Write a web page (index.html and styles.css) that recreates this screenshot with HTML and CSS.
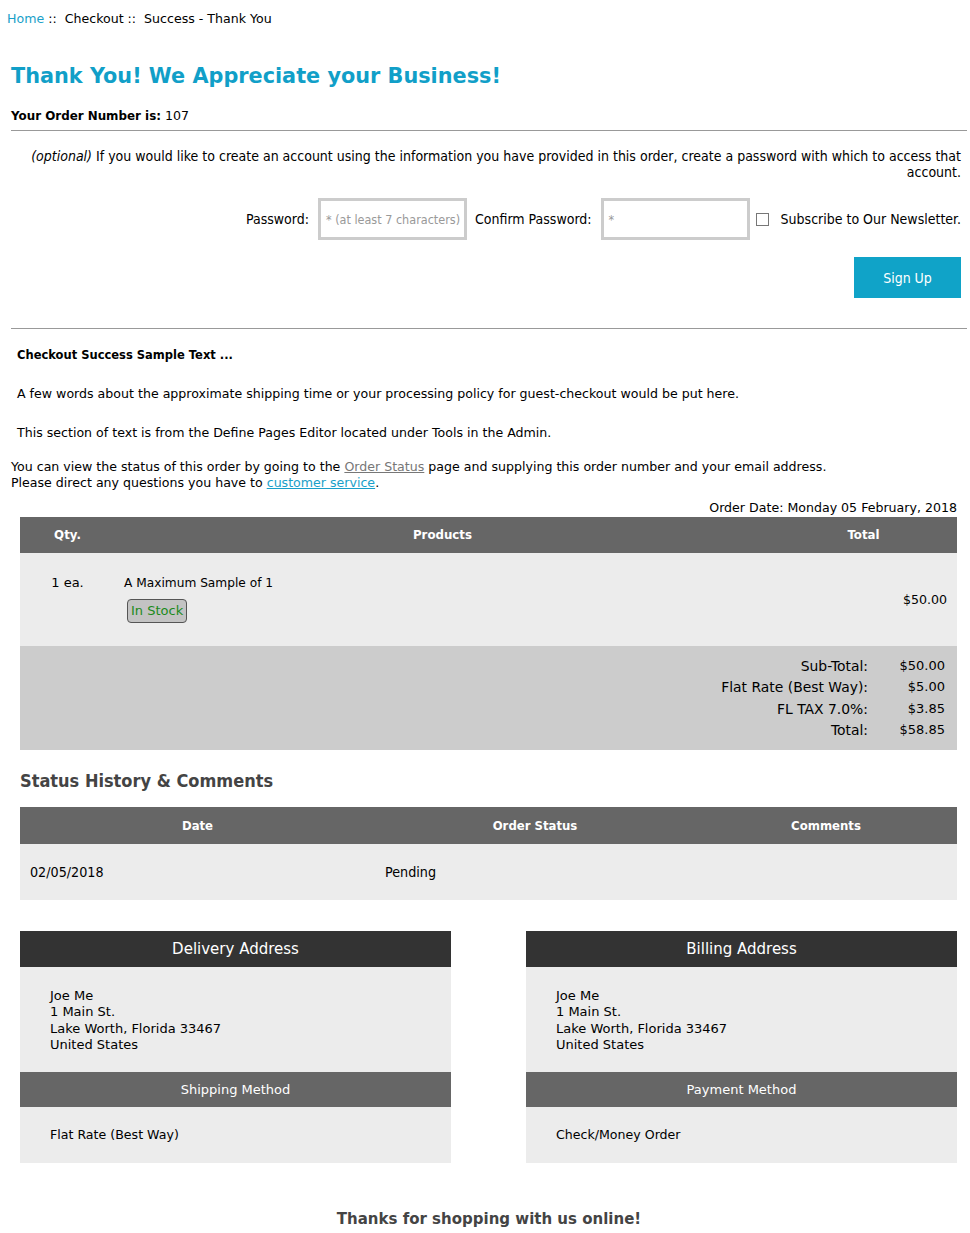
FILE: index.html
```html
<!DOCTYPE html>
<html>
<head>
<meta charset="utf-8">
<link rel="stylesheet" href="styles.css">
</head>
<body>
<div class="page">
  <div class="breadcrumb"><a href="#" class="crumb-link">Home</a>&nbsp;::&nbsp; Checkout&nbsp;::&nbsp; Success - Thank You</div>

  <h1 class="title">Thank You! We Appreciate your Business!</h1>

  <div class="order-num"><b>Your Order Number is:</b> 107</div>
  <hr class="rule">

  <div class="account">
    <p class="optional"><i>(optional)</i> If you would like to create an account using the information you have provided in this order, create a password with which to access that account.</p>
    <div class="form-row">
      <label class="lbl">Password:</label>
      <div class="field"><span class="ph">* (at least 7 characters)</span></div>
      <label class="lbl">Confirm Password:</label>
      <div class="field"><span class="ph">*</span></div>
      <span class="checkbox"></span>
      <label class="lbl news">Subscribe to Our Newsletter.</label>
    </div>
    <div class="btn-row"><button class="signup">Sign Up</button></div>
  </div>
  <hr class="rule">

  <div class="define">
    <p class="define-title">Checkout Success Sample Text ...</p>
    <p>A few words about the approximate shipping time or your processing policy for guest-checkout would be put here.</p>
    <p>This section of text is from the Define Pages Editor located under Tools in the Admin.</p>
  </div>

  <div class="status-note">You can view the status of this order by going to the <a href="#" class="gray-link">Order Status</a> page and supplying this order number and your email address.<br>Please direct any questions you have to <a href="#" class="blue-link">customer service</a>.</div>

  <div class="wrap">
    <div class="order-date">Order Date: Monday 05 February, 2018</div>
    <table class="products">
      <thead>
        <tr><th class="c-qty">Qty.</th><th class="c-prod">Products</th><th class="c-total">Total</th></tr>
      </thead>
      <tbody>
        <tr class="item">
          <td class="qty">1 ea.</td>
          <td class="prod"><span class="pname">A Maximum Sample of 1</span><br><span class="stock">In Stock</span></td>
          <td class="price">$50.00</td>
        </tr>
        <tr class="totals">
          <td colspan="3">
            <div class="tot-grid">
              <span class="tl">Sub-Total:</span><span>$50.00</span>
              <span class="tl">Flat Rate (Best Way):</span><span>$5.00</span>
              <span class="tl">FL TAX 7.0%:</span><span>$3.85</span>
              <span class="tl">Total:</span><span>$58.85</span>
            </div>
          </td>
        </tr>
      </tbody>
    </table>

    <h2 class="history-title">Status History &amp; Comments</h2>
    <table class="history">
      <thead>
        <tr><th class="h-date">Date</th><th class="h-status">Order Status</th><th class="h-comm">Comments</th></tr>
      </thead>
      <tbody>
        <tr><td>02/05/2018</td><td>Pending</td><td></td></tr>
      </tbody>
    </table>

    <div class="addresses">
      <div class="addr-box">
        <div class="addr-head">Delivery Address</div>
        <div class="addr-body">Joe Me<br>1 Main St.<br>Lake Worth, Florida 33467<br>United States</div>
        <div class="addr-sub">Shipping Method</div>
        <div class="addr-method">Flat Rate (Best Way)</div>
      </div>
      <div class="addr-box">
        <div class="addr-head">Billing Address</div>
        <div class="addr-body">Joe Me<br>1 Main St.<br>Lake Worth, Florida 33467<br>United States</div>
        <div class="addr-sub">Payment Method</div>
        <div class="addr-method">Check/Money Order</div>
      </div>
    </div>
  </div>

  <h3 class="thanks">Thanks for shopping with us online!</h3>
</div>
</body>
</html>
```

FILE: styles.css
```css
* { box-sizing: border-box; }
html, body { margin: 0; padding: 0; background: #fff; }
body {
  font-family: "DejaVu Sans", Verdana, sans-serif;
  font-size: 12.6px;
  color: #000;
}
.page { padding: 0 3px 0 11px; }

.breadcrumb {
  margin-left: -4px;
  padding-top: 11px;
  line-height: 16px;
  font-size: 12.6px;
}
.crumb-link { color: #199fc9; text-decoration: none; }

.title {
  margin: 35px 0 0 0;
  font-size: 20.8px;
  line-height: 28px;
  font-weight: bold;
  color: #119fc8;
}
.order-num {
  margin-top: 18px;
  line-height: 16px;
}
.order-num b { font-size: 11.9px; }
.rule {
  margin: 6px 0 0 0;
  border: 0;
  border-top: 1px solid #999;
  height: 0;
}

.account {
  padding-right: 6px;
  font-family: "DejaVu Sans Condensed", "DejaVu Sans", sans-serif;
  font-size: 14px;
}
.optional {
  margin: 17px 0 0 0;
  text-align: right;
  line-height: 16px;
}
.form-row {
  display: flex;
  justify-content: flex-end;
  align-items: center;
  margin-top: 18px;
}
.lbl { line-height: 16px; }
.field {
  width: 149px;
  height: 42px;
  border: 3px solid #cccccc;
  padding: 0 0 0 5px;
  display: flex;
  align-items: center;
  font-size: 12.5px;
  color: #999;
  margin: 0 8px 0 9px;
}
.checkbox {
  width: 13px;
  height: 13px;
  border: 1px solid #777;
  background: #fff;
  margin: 0 12px 0 -2px;
}
.btn-row {
  display: flex;
  justify-content: flex-end;
  margin-top: 17px;
  padding-bottom: 24px;
}
.signup {
  width: 107px;
  height: 41px;
  border: 0;
  background: #10a3c8;
  color: #fff;
  font-family: "DejaVu Sans Condensed", "DejaVu Sans", sans-serif;
  font-size: 14px;
  padding: 0;
}

.define { padding-left: 6px; }
.define p { margin: 0; line-height: 16px; }
.define .define-title { margin-top: 18px; font-weight: bold; font-size: 11.5px; }
.define p + p { margin-top: 23px; }

.status-note {
  margin-top: 18px;
  line-height: 16px;
}
.gray-link { color: #777; }
.blue-link { color: #199fc9; }

.wrap { padding: 0 10px 0 9px; }
.order-date {
  margin-top: 9px;
  margin-bottom: 1px;
  text-align: right;
  line-height: 16px;
}
table { border-collapse: collapse; width: 100%; }
.products th {
  background: #666;
  color: #fff;
  font-weight: bold;
  font-size: 11.8px;
  height: 36px;
  padding: 0;
  text-align: center;
}
.c-qty { width: 95px; }
.c-total { width: 187px; }
.item td { background: #ececec; height: 93px; padding: 0; vertical-align: middle; }
.item .qty { text-align: center; vertical-align: top; padding-top: 22px; font-size: 13px; }
.item .prod { vertical-align: top; padding: 22px 0 0 9px; line-height: 16px; }
.pname { font-size: 12.2px; }
.item .price { text-align: right; padding-right: 10px; }
.stock {
  display: inline-block;
  margin: 8px 0 0 3px;
  padding: 3px 3px;
  line-height: 16px;
  background: #c3c3c3;
  border: 1px solid #555;
  border-radius: 4px;
  color: #1b8a1b;
  font-size: 13px;
}
.totals td { background: #cccccc; padding: 12px 12px 12px 0; }
.tot-grid {
  display: grid;
  grid-template-columns: 1fr 77px;
  justify-items: end;
  row-gap: 5.33px;
  line-height: 16px;
  font-size: 13px;
}
.tl { font-size: 13.9px; }

.history-title {
  margin: 20px 0 0 0;
  font-family: "DejaVu Sans Condensed", "DejaVu Sans", sans-serif;
  font-size: 18px;
  line-height: 22px;
  color: #444;
}
.history {
  margin-top: 15px;
  font-family: "DejaVu Sans Condensed", "DejaVu Sans", sans-serif;
}
.history th {
  background: #666;
  color: #fff;
  height: 37px;
  padding: 0;
  text-align: center;
  font-size: 13px;
}
.h-date { width: 355px; }
.h-status { width: 320px; }
.history td {
  background: #ececec;
  height: 56px;
  padding: 0 0 0 10px;
  font-size: 14.2px;
}

.addresses {
  margin-top: 31px;
  display: flex;
  justify-content: space-between;
}
.addr-box { width: 431px; }
.addr-head {
  background: #333;
  color: #fff;
  height: 36px;
  line-height: 36px;
  text-align: center;
  font-size: 15px;
}
.addr-body {
  background: #ececec;
  padding: 21px 30px 20px;
  line-height: 16.4px;
  height: 105px;
  font-size: 13px;
}
.addr-sub {
  background: #666;
  color: #fff;
  height: 35px;
  line-height: 35px;
  text-align: center;
  font-size: 13px;
}
.addr-method {
  background: #ececec;
  height: 56px;
  line-height: 56px;
  padding-left: 30px;
}

.thanks {
  margin: 46px 0 0 0;
  text-align: center;
  font-size: 15px;
  line-height: 20px;
  color: #444;
}
```
